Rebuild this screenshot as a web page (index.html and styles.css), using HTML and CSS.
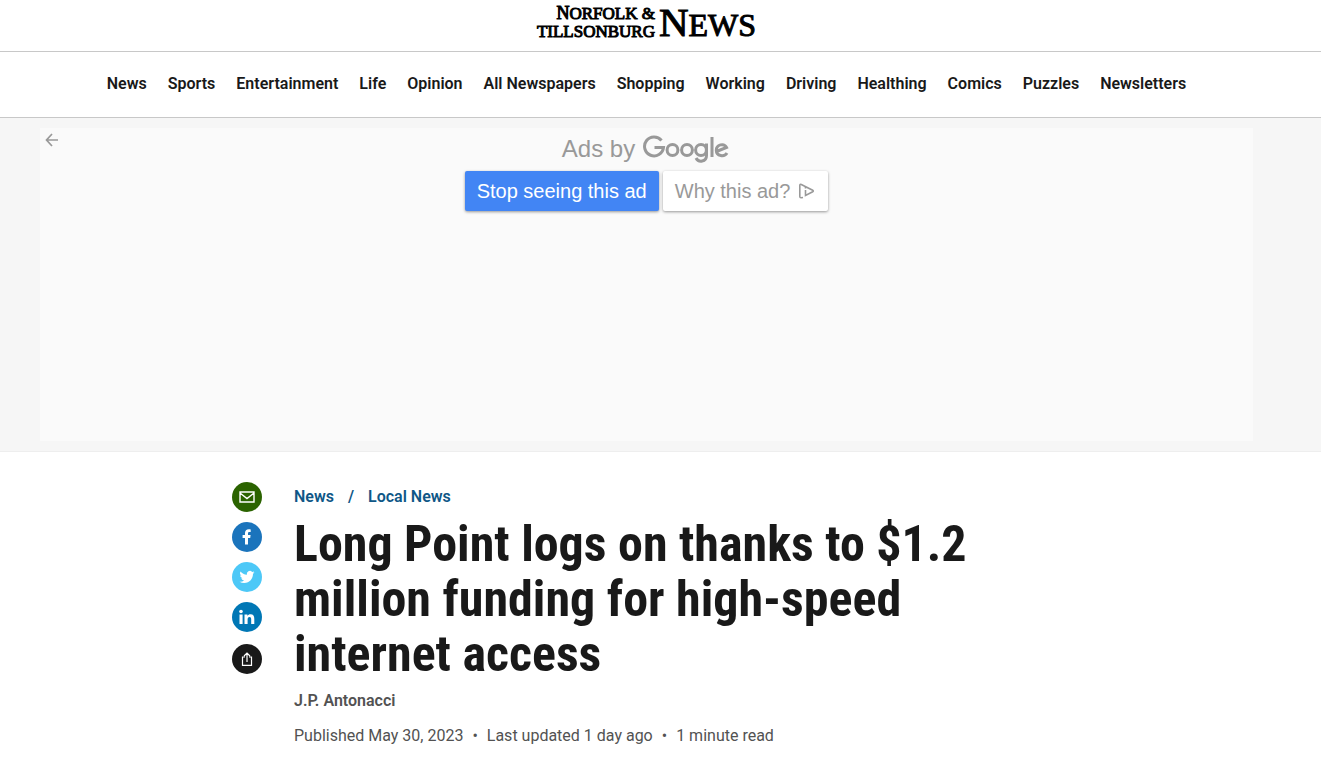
FILE: index.html
```html
<!DOCTYPE html>
<html lang="en">
<head>
    <meta charset="UTF-8">
    <meta name="viewport" content="width=device-width, initial-scale=1">
    <title>Long Point logs on thanks to $1.2 million funding for high-speed internet access</title>
    <link rel="stylesheet" href="styles.css">
</head>
<body>
    <header class="masthead">
        <a class="logo" href="#">
            <span class="logo-places">
                <span><b>N</b>ORFOLK &amp;</span>
                <span>TILLSONBURG</span>
            </span>
            <span class="logo-news"><b>N</b>EWS</span>
        </a>
    </header>

    <nav class="main-nav">
        <a href="#">News</a>
        <a href="#">Sports</a>
        <a href="#">Entertainment</a>
        <a href="#">Life</a>
        <a href="#">Opinion</a>
        <a href="#">All Newspapers</a>
        <a href="#">Shopping</a>
        <a href="#">Working</a>
        <a href="#">Driving</a>
        <a href="#">Healthing</a>
        <a href="#">Comics</a>
        <a href="#">Puzzles</a>
        <a href="#">Newsletters</a>
    </nav>

    <section class="ad">
        <div class="ad-box">
            <button class="ad-back" aria-label="Back">
                <svg width="14" height="14" viewBox="0 0 14 14"><path d="M13 7H2M7 1L1.500 7L7 13" fill="none" stroke="#999" stroke-width="1.700"/></svg>
            </button>
            <p class="ad-by">Ads by
                <svg class="google" width="88" height="30" viewBox="0 0 88 30" role="img" aria-label="Google">
                    <g fill="none" stroke="#999" stroke-width="3">
                        <path d="M18.500 6.500A9.500 9.500 0 1 0 20.500 13.500H11.500"/>
                        <circle cx="29.500" cy="16" r="5.400"/>
                        <circle cx="44" cy="16" r="5.400"/>
                        <circle cx="58" cy="16" r="5.400"/>
                        <path d="M63.500 9.500V21.500C63.500 28 55.500 29 53 24"/>
                        <path d="M69 3V23"/>
                        <path d="M73.500 17.500L83.500 13.400C81 8.700 73.300 10.500 73.300 16.300C73.300 22.500 81.500 23.300 84 19"/>
                    </g>
                </svg>
            </p>
            <div class="ad-buttons">
                <button class="ad-stop">Stop seeing this ad</button>
                <button class="ad-why">Why this ad?
                    <svg width="18" height="16" viewBox="0 0 18 16" fill="none" stroke="#999" stroke-width="1.600"><path d="M5 14.500L3 14.800Q1.800 14.800 1.800 13.500V2.500Q1.800 .9 3.300 1.500L14.700 7.300Q15.900 8 14.700 8.700L7.500 12.400V7"/><path d="M6.700 4.700H8.300"/></svg>
                </button>
            </div>
        </div>
    </section>

    <main class="article">
        <aside class="share">
            <a class="share-mail" href="#" aria-label="Email">
                <svg viewBox="0 0 30 30"><path d="M8 10H22V20H8ZM8 11L15 16.500L22 11" fill="none" stroke="#fff" stroke-width="1.400"/></svg>
            </a>
            <a class="share-facebook" href="#" aria-label="Facebook">
                <svg viewBox="0 0 30 30"><path d="M13 22.500V16H10.600V13H13V11C13 8.500 14.500 7.200 16.700 7.200C17.700 7.200 18.700 7.400 18.700 7.400V10H17.400C16.300 10 16 10.600 16 11.300V13H18.600L18.200 16H16V22.500Z" fill="#fff"/></svg>
            </a>
            <a class="share-twitter" href="#" aria-label="Twitter">
                <svg viewBox="0 0 24 24"><path transform="translate(6 6) scale(.5)" d="M23.950 4.570a10 10 0 0 1-2.820.77 4.960 4.960 0 0 0 2.160-2.720c-.95.550-2 .95-3.130 1.180a4.920 4.920 0 0 0-8.380 4.480C7.690 8.090 4.070 6.130 1.640 3.160a4.920 4.920 0 0 0 1.520 6.570 4.900 4.900 0 0 1-2.230-.61v.06a4.920 4.920 0 0 0 3.950 4.830 5 5 0 0 1-2.210.08 4.940 4.940 0 0 0 4.600 3.420A9.870 9.870 0 0 1 0 19.540a13.990 13.990 0 0 0 7.550 2.210c9.050 0 14-7.500 14-13.980 0-.21 0-.42-.02-.63a9.940 9.940 0 0 0 2.420-2.570z" fill="#fff"/></svg>
            </a>
            <a class="share-linkedin" href="#" aria-label="LinkedIn">
                <svg viewBox="0 0 30 30" fill="#fff"><circle cx="9" cy="9.500" r="1.800"/><path d="M7.500 12.600H10.600V22H7.500ZM12.500 12.600H15.400V13.900C16 12.900 17.100 12.300 18.500 12.300C21.400 12.300 22.300 14.100 22.300 17V22H19.200V17.400C19.200 16 18.900 14.900 17.500 14.900C16.100 14.900 15.600 16 15.600 17.400V22H12.500Z"/></svg>
            </a>
            <a class="share-more" href="#" aria-label="Share">
                <svg viewBox="0 0 30 30"><path d="M13 13H10.500V21.300H19.500V13H17M15 18V9.500M12 12L15 9L18 12" fill="none" stroke="#fff" stroke-width="1.200"/></svg>
            </a>
        </aside>

        <article class="story">
            <div class="breadcrumbs">
                <a href="#">News</a>
                <span>/</span>
                <a href="#">Local News</a>
            </div>
            <h1>Long Point logs on thanks to $1.2 million funding for high-speed internet access</h1>
            <p class="author">J.P. Antonacci</p>
            <p class="published">
                <span>Published May 30, 2023</span>
                <span class="dot">•</span>
                <span>Last updated 1 day ago</span>
                <span class="dot">•</span>
                <span>1 minute read</span>
            </p>
        </article>
    </main>
</body>
</html>
```
FILE: styles.css
```css
* {
    box-sizing: border-box;
}
body {
    margin: 0;
    background: #fff;
    color: #191919;
    font-family: Roboto, Arial, sans-serif;
    font-size: 16px;
}
a {
    color: inherit;
    text-decoration: none;
}
p, h1 {
    margin: 0;
}
svg {
    display: block;
}
button {
    border: 0;
    padding: 0;
    background: none;
    font: inherit;
    cursor: pointer;
}

/* header */
.masthead {
    display: flex;
    justify-content: center;
    height: 52px;
    padding: 4px 28px 0 0;
    border-bottom: 1px solid #c8c8c8;
}
.logo {
    display: flex;
    gap: 4px;
    color: #000;
    font-family: "Liberation Serif", "Times New Roman", serif;
}
.logo b {
    font-weight: normal;
}
.logo-places {
    display: flex;
    flex-direction: column;
    align-items: flex-end;
    font-size: 17px;
    line-height: 18px;
    -webkit-text-stroke: 1px #000;
}
.logo-places b {
    font-size: 18px;
}
.logo-news {
    font-size: 32px;
    line-height: 36px;
    -webkit-text-stroke: 1px #000;
}
.logo-news b {
    font-size: 41px;
}

.main-nav {
    display: flex;
    justify-content: center;
    gap: 21px;
    padding: 20px 28px 22px 0;
    border-bottom: 1px solid #c8c8c8;
    font-weight: 600;
    line-height: 23px;
}

/* ad */
.ad {
    padding: 10px 68px 10px 40px;
    background: #f6f6f6;
    border-bottom: 1px solid #eee;
}
.ad-box {
    position: relative;
    min-height: 313px;
    padding-top: 5px;
    background: #fafafa;
    color: #999;
    font-family: "Liberation Sans", Arial, sans-serif;
}
.ad-back {
    position: absolute;
    top: 5px;
    left: 5px;
}
.ad-by {
    display: flex;
    justify-content: center;
    align-items: center;
    gap: 8px;
    height: 32px;
    font-size: 24px;
}
.ad-buttons {
    display: flex;
    justify-content: center;
    gap: 4px;
    margin-top: 6px;
    font-size: 20px;
}
.ad-buttons button {
    display: flex;
    align-items: center;
    gap: 8px;
    height: 40px;
    padding: 0 12px;
    border-radius: 2px;
    box-shadow: 0 1px 3px rgba(0, 0, 0, 0.4);
}
.ad-stop {
    background: #4285f4;
    color: #fff;
}
.ad-why {
    background: #fff;
    color: #999;
}

/* article */
.article {
    display: flex;
    gap: 32px;
    max-width: 857px;
    margin: 0 auto;
    padding: 30px 28px 0 0;
}
.share {
    display: flex;
    flex-direction: column;
    gap: 10px;
}
.share a {
    width: 30px;
    height: 30px;
    border-radius: 50%;
}
.share-mail {
    background: #2b6300;
}
.share-facebook {
    background: #1b74bc;
}
.share-twitter {
    background: #4dc8f7;
}
.share-linkedin {
    background: #0077b5;
}
.share-more {
    margin-top: 2px;
    background: #191919;
}
.story {
    flex: 1;
}
.breadcrumbs {
    display: flex;
    gap: 14px;
    color: #0f5787;
    font-weight: 600;
    line-height: 30px;
}
h1 {
    margin-top: 5px;
    font-family: "Roboto Condensed", Roboto, sans-serif;
    font-size: 50px;
    font-weight: 700;
    line-height: 55px;
}
.author {
    margin-top: 7px;
    color: #525252;
    font-weight: 600;
    line-height: 24px;
}
.published {
    display: flex;
    gap: 9px;
    margin-top: 11px;
    color: #525252;
    line-height: 24px;
}
```
